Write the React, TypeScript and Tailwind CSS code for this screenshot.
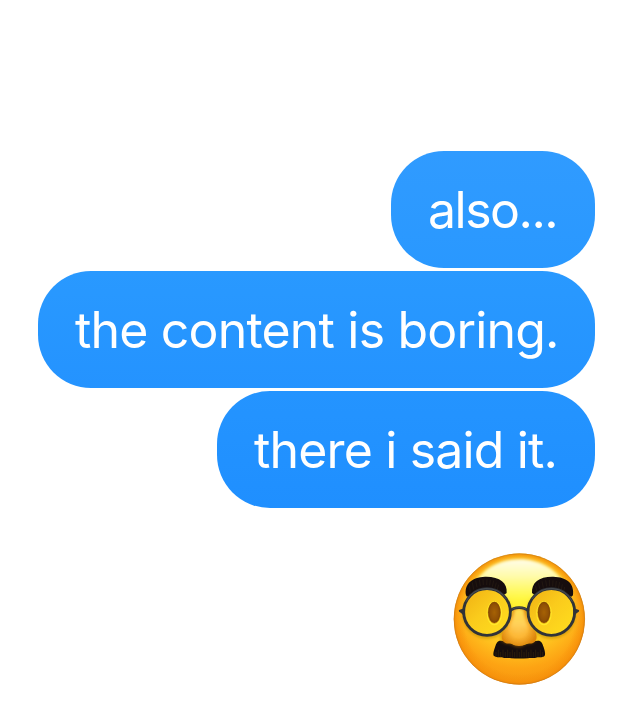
interface Message {
    text: string;
    bubble: string;
    label: string;
}

const messages: Message[] = [
    {
        text: 'also...',
        bubble: 'w-[204px] from-[#309bff] to-[#2998ff]',
        label: 'tracking-[-1.5px]',
    },
    {
        text: 'the content is boring.',
        bubble: 'w-[557px] from-[#2999ff] to-[#2493ff]',
        label: 'tracking-[-0.82px]',
    },
    {
        text: 'there i said it.',
        bubble: 'w-[378px] from-[#2494ff] to-[#1f8fff]',
        label: 'tracking-[-0.85px]',
    },
];

const Bubble = ({ text, bubble, label }: Message) => (
    <div
        className={`flex h-[117px] items-center rounded-[53px] bg-linear-to-b pl-[37px] ${bubble}`}
    >
        <span
            className={`whitespace-nowrap text-[50px] leading-[60px] text-white ${label}`}
        >
            {text}
        </span>
    </div>
);

// Hair strokes along the lower edge of the moustache
const bristles = Array.from({ length: 21 }, (_, i) => 156 + i * 7);

const DisguisedFace = () => (
    <svg viewBox="0 0 450 450" className="h-[150px] w-[150px]">
        <defs>
            <radialGradient
                id="face"
                gradientUnits="userSpaceOnUse"
                cx="226"
                cy="150"
                r="270"
            >
                <stop offset="0" stopColor="#fff62f" />
                <stop offset="0.35" stopColor="#ffe329" />
                <stop offset="0.62" stopColor="#ffc01e" />
                <stop offset="0.82" stopColor="#fda313" />
                <stop offset="1" stopColor="#f6960f" />
            </radialGradient>
            <radialGradient
                id="rim"
                gradientUnits="userSpaceOnUse"
                cx="226"
                cy="222"
                r="197"
            >
                <stop offset="0.84" stopColor="#f78f09" stopOpacity="0" />
                <stop offset="0.95" stopColor="#f78f09" stopOpacity="0.6" />
                <stop offset="1" stopColor="#ec8507" stopOpacity="0.9" />
            </radialGradient>
            <linearGradient id="shine" x1="0" y1="0" x2="0" y2="1">
                <stop offset="0" stopColor="#fffdea" />
                <stop offset="0.35" stopColor="#fffcb0" stopOpacity="0.95" />
                <stop offset="0.7" stopColor="#fffa62" stopOpacity="0.8" />
                <stop offset="1" stopColor="#fff62f" stopOpacity="0" />
            </linearGradient>
            <linearGradient id="lens" x1="0" y1="0" x2="1" y2="1">
                <stop offset="0" stopColor="#f0b013" />
                <stop offset="0.45" stopColor="#facb1c" />
                <stop offset="1" stopColor="#ffdf1e" />
            </linearGradient>
            <radialGradient id="eye" cx="0.5" cy="0.5" r="0.55">
                <stop offset="0" stopColor="#a66205" />
                <stop offset="0.65" stopColor="#925105" />
                <stop offset="1" stopColor="#774004" />
            </radialGradient>
            <radialGradient
                id="nose"
                gradientUnits="userSpaceOnUse"
                cx="223"
                cy="250"
                r="58"
            >
                <stop offset="0" stopColor="#ffcb56" />
                <stop offset="0.45" stopColor="#fdb836" />
                <stop offset="1" stopColor="#dc840b" />
            </radialGradient>
            <linearGradient id="bridge" x1="0" y1="0" x2="0" y2="1">
                <stop offset="0" stopColor="#ffe04e" />
                <stop offset="0.55" stopColor="#ffd05a" />
                <stop offset="1" stopColor="#f9ab2a" stopOpacity="0" />
            </linearGradient>
            <filter id="soft" x="-30%" y="-30%" width="160%" height="160%">
                <feGaussianBlur stdDeviation="4" />
            </filter>
            <filter id="hair" x="-10%" y="-10%" width="120%" height="120%">
                <feGaussianBlur stdDeviation="0.9" />
            </filter>
        </defs>

        <circle cx="226" cy="222" r="196.5" fill="url(#face)" />
        <circle cx="226" cy="222" r="196.5" fill="url(#rim)" />
        <path
            d="M84 128C110 74 164 43 226 43s116 31 142 85c10 30-8 62-48 62H132c-40 0-58-32-48-62Z"
            fill="url(#shine)"
            filter="url(#soft)"
        />
        <circle
            cx="226"
            cy="222"
            r="196"
            fill="none"
            stroke="#a76722"
            strokeOpacity="0.65"
            strokeWidth="1.5"
        />

        {/* shadows under the glasses */}
        <g
            fill="none"
            stroke="#b98a00"
            strokeOpacity="0.7"
            strokeWidth="9"
            filter="url(#soft)"
        >
            <circle cx="129" cy="207" r="69" />
            <circle cx="322" cy="207" r="69" />
        </g>

        <circle cx="129" cy="201" r="67" fill="url(#lens)" />
        <circle cx="322" cy="201" r="67" fill="url(#lens)" />

        {[151, 300].map((cx) => (
            <g key={cx}>
                <ellipse
                    cx={cx}
                    cy="205"
                    rx="23"
                    ry="36"
                    fill="#ffe92c"
                    filter="url(#hair)"
                />
                <ellipse cx={cx} cy="203" rx="20" ry="33" fill="#dc9c0c" />
                <ellipse cx={cx} cy="202" rx="18.5" ry="32" fill="url(#eye)" />
            </g>
        ))}

        {/* eyebrows */}
        <g fill="#15110c" filter="url(#hair)">
            <path d="M66 151c-6-34 17-54 57-56 44-1 68 18 65 49l-5 4-7 2c-12-12-26-17-45-17-24 0-40 7-55 19l-7 3Z" />
            <path d="M264 144c-2-32 22-50 64-49 41 1 64 21 59 56l-5 4-8-3c-14-13-31-19-53-19-19 0-33 6-45 17l-7-2Z" />
        </g>
        <g fill="none" stroke="#4b3d20" strokeOpacity="0.5" strokeWidth="1.4">
            <path d="M76 122l3 20m6-30 4 22m6-27 4 20m7-23 3 19m8-20 1 17m11-17-1 17m11-15-2 16m12-14-4 18m12-12-5 18m12-12-5 17" />
            <path d="M274 122l5 18m4-26 5 19m6-24 4 19m7-22 3 18m8-19 1 18m10-17-1 18m11-16-2 18m12-15-4 20m12-13-4 20m11-12-4 19" />
        </g>

        {/* moustache */}
        <path
            d="M149 332c-3-5 1-16 4-25 4-13 7-20 17-20 18 0 34 14 56 14s38-14 56-14c10 0 13 7 17 20 3 9 6 20 3 25-5 6-14 4-22 5-11 4-20 1-28 3-16 1-34 1-50 0-8-2-18 1-28-3-9-1-18 1-25-5Z"
            fill="#140f09"
            filter="url(#hair)"
        />
        <g stroke="#76500d" strokeOpacity="0.5" strokeWidth="1.4">
            {bristles.map((x, i) => (
                <path key={x} d={`M${x} ${i % 2 ? 314 : 321}V337`} />
            ))}
        </g>

        {/* nose */}
        <path
            d="M206 198c-3 18-8 35-18 51-20 4-27 33-10 43 8 5 16 4 23 5 13 12 31 12 44 0 8-1 16 0 24-5 16-11 9-39-12-43-7-15-12-33-16-51-8-8-27-8-35 0Z"
            fill="#c67a06"
            fillOpacity="0.5"
            filter="url(#soft)"
        />
        <path
            d="M207 196c-3 20-10 37-18 54-19 9-20 36-6 43 8 4 15 1 20 3 13 9 31 9 44 0 5-2 13 1 21-3 14-7 13-34-6-43-8-17-14-34-17-54-9-8-29-8-38 0Z"
            fill="url(#nose)"
            filter="url(#hair)"
        />
        <path
            d="M211 194c-2 20-6 35-10 51-4 20 9 36 24 36s28-16 24-36c-5-16-8-31-10-51-8-6-21-6-28 0Z"
            fill="url(#bridge)"
            filter="url(#soft)"
        />

        {/* glasses */}
        <path d="M47 194c7-1 11-4 15-8v31c-4-6-8-11-14-15-4-3-5-7-1-8Z" fill="#303338" />
        <path d="M403 194c-7-1-11-4-15-8v31c4-6 8-11 14-15 4-3 5-7 1-8Z" fill="#303338" />
        <g fill="none" stroke="#303338" strokeWidth="8.5">
            <circle cx="129" cy="201" r="70" />
            <circle cx="322" cy="201" r="70" />
            <path d="M198 198c12-13 42-14 55 0" />
        </g>
        <g fill="none" stroke="#686b70" strokeOpacity="0.7" strokeWidth="2">
            <path d="M66 170a70 70 0 0 1 121-8" />
            <path d="M264 162a70 70 0 0 1 121 8" />
            <path d="M205 192c12-6 29-6 41 0" />
        </g>
    </svg>
);

export default function App() {
    return (
        <main className="flex h-[721px] w-full flex-col items-end overflow-hidden bg-white pr-[48px] pt-[151px] font-['Inter','Liberation_Sans',sans-serif]">
            <div className="flex flex-col items-end gap-[3px]">
                {messages.map((message) => (
                    <Bubble key={message.text} {...message} />
                ))}
            </div>
            <div className="mr-px mt-[37px]">
                <DisguisedFace />
            </div>
        </main>
    );
}
